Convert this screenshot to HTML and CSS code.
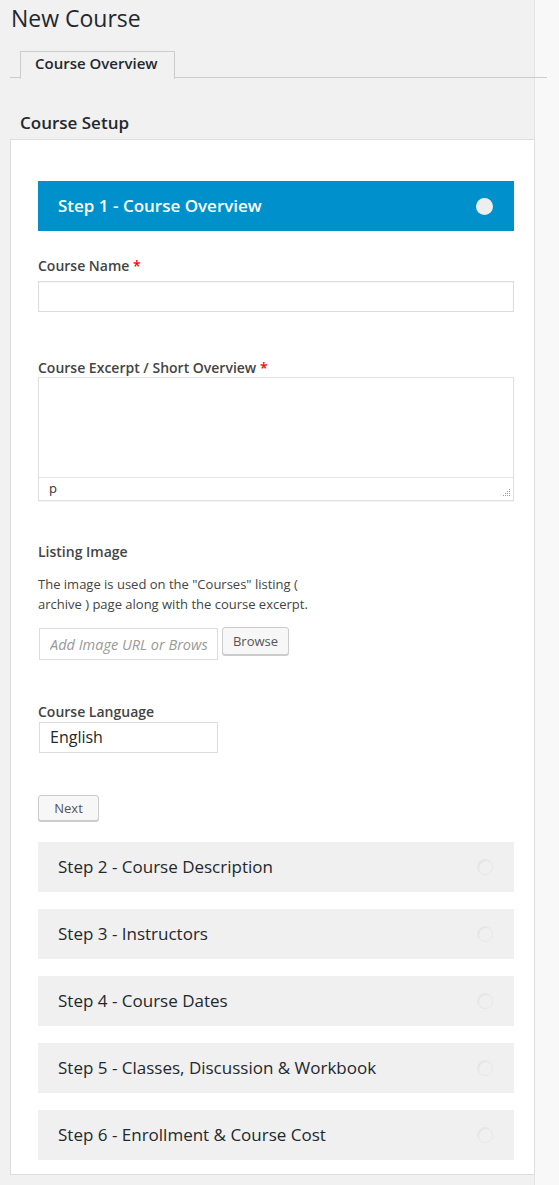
FILE: index.html
```html
<!DOCTYPE html>
<html>
<head>
<meta charset="utf-8">
<link rel="stylesheet" href="styles.css">
</head>
<body>
<div class="wrap">
  <h1 class="page-title">New Course</h1>
  <div class="tabs">
    <span class="tab">Course Overview</span>
  </div>
  <h2 class="setup-title">Course Setup</h2>
  <div class="panel">
    <div class="step step-active">
      <span class="step-title">Step 1 - Course Overview</span>
      <span class="dot dot-active"></span>
    </div>

    <div class="field field-first">
      <label class="label">Course Name <span class="req">*</span></label>
      <div class="text-input"></div>
    </div>

    <div class="field field-excerpt">
      <label class="label">Course Excerpt / Short Overview <span class="req">*</span></label>
      <div class="editor">
        <div class="editor-body"></div>
        <div class="editor-status">
          <span class="path">p</span>
          <span class="grip">
            <svg width="8" height="8" viewBox="0 0 8 8"><g fill="#999"><rect x="6" y="0" width="1" height="1"/><rect x="4" y="2" width="1" height="1"/><rect x="6" y="2" width="1" height="1"/><rect x="2" y="4" width="1" height="1"/><rect x="4" y="4" width="1" height="1"/><rect x="6" y="4" width="1" height="1"/><rect x="0" y="6" width="1" height="1"/><rect x="2" y="6" width="1" height="1"/><rect x="4" y="6" width="1" height="1"/><rect x="6" y="6" width="1" height="1"/></g></svg>
          </span>
        </div>
      </div>
    </div>

    <div class="field field-image">
      <label class="label">Listing Image</label>
      <p class="desc">The image is used on the "Courses" listing (<br>archive ) page along with the course excerpt.</p>
      <div class="image-row">
        <input class="url-input" type="text" placeholder="Add Image URL or Browse for Image">
        <button class="btn btn-browse" type="button">Browse</button>
      </div>
    </div>

    <div class="field field-lang">
      <label class="label">Course Language</label>
      <div class="lang-box">English</div>
    </div>

    <button class="btn btn-next" type="button">Next</button>

    <div class="steps">
      <div class="step"><span class="step-title">Step 2 - Course Description</span><span class="dot"></span></div>
      <div class="step"><span class="step-title">Step 3 - Instructors</span><span class="dot"></span></div>
      <div class="step"><span class="step-title">Step 4 - Course Dates</span><span class="dot"></span></div>
      <div class="step"><span class="step-title">Step 5 - Classes, Discussion &amp; Workbook</span><span class="dot"></span></div>
      <div class="step"><span class="step-title">Step 6 - Enrollment &amp; Course Cost</span><span class="dot"></span></div>
    </div>
  </div>
</div>
</body>
</html>
```
FILE: styles.css
```css
* { box-sizing: border-box; }
html, body { margin: 0; padding: 0; }
body {
  font-family: "Open Sans", "Noto Sans", sans-serif;
  color: #23282d;
  background: linear-gradient(to right, #f1f1f1 0, #f1f1f1 534px, #e4e4e4 534px, #e4e4e4 535px, #f8f8f8 535px);
  min-height: 1185px;
}
.wrap {
  width: 535px;
  padding: 0 0 0 10px;
}
.page-title {
  margin: 0;
  padding: 4px 0 0 1px;
  font-size: 23px;
  font-weight: 400;
  line-height: 29px;
  color: #23282d;
}
.tabs {
  margin-top: 17px;
  width: 537px;
  border-bottom: 1px solid #ccc;
  padding-left: 10px;
  height: 28px;
}
.tab {
  display: inline-block;
  height: 28px;
  padding: 0 0 0 14px;
  border: 1px solid #ccc;
  border-bottom: none;
  background: #f1f1f1;
  font-size: 15px;
  font-weight: 600;
  line-height: 22px;
  color: #23282d;
  position: relative;
  top: 1px;
  width: 155px;
  white-space: nowrap;
}
.setup-title {
  margin: 0;
  padding: 0 0 0 10px;
  margin-top: 33px;
  font-size: 17px;
  font-weight: 600;
  line-height: 23px;
  height: 28px;
  color: #23282d;
}
.panel {
  width: 525px;
  background: #fff;
  border: 1px solid #ddd;
  padding: 41px 20px 14px 27px;
}
.step {
  height: 50px;
  display: flex;
  align-items: center;
  justify-content: space-between;
  padding: 0 21px 0 20px;
  background: #f0f0f0;
}
.step-title {
  font-size: 17px;
  line-height: 24px;
  color: #23282d;
}
.step-active {
  background: #0091cd;
}
.step-active .step-title {
  color: #fff;
  font-weight: 600;
}
.dot {
  width: 16px;
  height: 16px;
  border-radius: 50%;
  border: 1px solid #e8e8e8;
  box-shadow: inset 1px 1px 1px rgba(0,0,0,0.06);
}
.dot-active {
  background: #eee;
  border: none;
  box-shadow: none;
  width: 17px;
  height: 17px;
}
.field { display: block; }
.label {
  display: block;
  font-size: 14px;
  font-weight: 600;
  line-height: 18px;
  color: #444;
}
.req { color: #f00; }
.field-first { margin-top: 26px; }
.field-first .label { margin-bottom: 6px; }
.text-input {
  height: 31px;
  border: 1px solid #ddd;
  background: #fff;
  box-shadow: inset 0 1px 2px rgba(0,0,0,0.04);
}
.field-excerpt { margin-top: 47px; }
.editor {
  border: 1px solid #e0e0e0;
  height: 124px;
  display: flex;
  flex-direction: column;
  box-shadow: 0 1px 1px rgba(0,0,0,0.04);
}
.editor-body { flex: 1; }
.editor-status {
  height: 23px;
  border-top: 1px solid #e5e5e5;
  display: flex;
  align-items: center;
  justify-content: space-between;
  padding: 0 2px 0 10px;
  font-size: 13px;
  color: #333;
}
.editor-status .path { line-height: 18px; margin-top: -2px; }
.grip { display: flex; align-self: flex-end; margin-bottom: 3px; }
.field-image { margin-top: 42px; }
.desc {
  margin: 13px 0 0 0;
  font-size: 13px;
  line-height: 20px;
  color: #444;
}
.image-row {
  margin-top: 14px;
  margin-left: 1px;
  display: flex;
  align-items: flex-start;
  gap: 4px;
}
.url-input {
  width: 179px;
  height: 32px;
  border: 1px solid #ddd;
  padding: 0 10px;
  font-family: "Open Sans", "Noto Sans", sans-serif;
  font-size: 14.5px;
  font-style: italic;
  background: #fff;
  margin: 0;
  outline: none;
}
.url-input::placeholder { color: #999; font-style: italic; }
.btn {
  font-family: "Open Sans", "Noto Sans", sans-serif;
  font-size: 13px;
  color: #555;
  background: #f7f7f7;
  border: 1px solid #ccc;
  border-radius: 3px;
  box-shadow: 0 1px 0 #ccc;
  padding: 0;
  margin: 0;
}
.btn-browse {
  width: 67px;
  height: 28px;
  margin-top: -1px;
  line-height: 24px;
}
.field-lang { margin-top: 43px; }
.field-lang .label { margin-bottom: 1px; }
.lang-box {
  margin-left: 1px;
  width: 179px;
  height: 31px;
  border: 1px solid #ddd;
  padding: 0 10px;
  font-size: 16px;
  line-height: 29px;
  color: #23282d;
}
.btn-next {
  display: block;
  margin-top: 42px;
  width: 61px;
  height: 26px;
  line-height: 22px;
}
.steps {
  margin-top: 21px;
  display: flex;
  flex-direction: column;
  gap: 17px;
}
```
